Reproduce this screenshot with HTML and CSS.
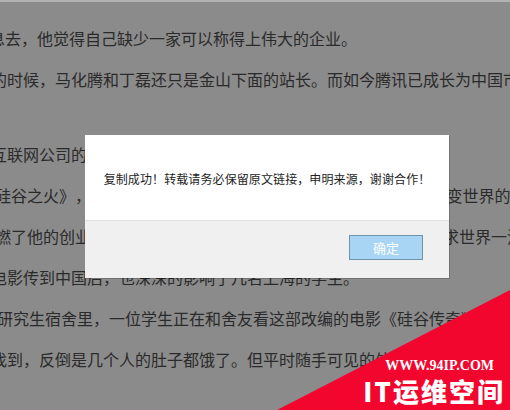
FILE: index.html
```html
<!DOCTYPE html>
<html lang="zh-CN">
<head>
<meta charset="utf-8">
<title>复制成功</title>
<link rel="stylesheet" href="styles.css">
</head>
<body>
<div class="topstrip"></div>
<main class="article">
  <p class="l1">息去，他觉得自己缺少一家可以称得上伟大的企业。</p>
  <p class="l2">的时候，马化腾和丁磊还只是金山下面的站长。而如今腾讯已成长为中国市值最高的公司</p>
  <div class="gap"></div>
  <p class="l3">互联网公司的创始人</p>
  <p class="l4">硅谷之火》， 这本讲述了苹果、微软等公司创始人如何用电脑改变世界的故事</p>
  <p class="l5">燃了他的创业梦想。他希望自己能打造一家像微软、苹果那样追求世界一流的企业</p>
  <p class="l6">电影传到中国后，也深深的影响了几名上海的学生。</p>
  <p class="l7">研究生宿舍里，一位学生正在和舍友看这部改编的电影《硅谷传奇》</p>
  <p class="l8">找到，反倒是几个人的肚子都饿了。但平时随手可见的外卖</p>
</main>

<div class="dialog">
  <div class="dialog-body">复制成功！转载请务必保留原文链接，申明来源，谢谢合作！</div>
  <div class="dialog-foot">
    <button class="btn-ok" type="button">确定</button>
  </div>
</div>

<div class="watermark">
  <div class="wm-url">WWW.94IP.COM</div>
  <div class="wm-name">IT运维空间</div>
</div>
</body>
</html>
```

FILE: styles.css
```css
html, body {
  margin: 0;
  padding: 0;
}
body {
  width: 510px;
  height: 410px;
  overflow: hidden;
  background: #8b8b8b;
  position: relative;
  font-family: "Noto Sans CJK SC", "Noto Sans", sans-serif;
  text-spacing-trim: space-all;
}
.topstrip {
  height: 2px;
  background: #b2b2b2;
}
.article {
  padding-top: 24px;
  color: #2a2a2a;
  font-size: 16px;
}
.article p {
  margin: 0 0 17px 0;
  line-height: 24px;
  white-space: pre;
}
.article .gap {
  height: 34px;
}
.l1 { margin-left: -11px !important; }
.l2 { margin-left: -9px !important; }
.l3 { margin-left: -9px !important; }
.l4 { margin-left: -5px !important; }
.l5 { margin-left: -5px !important; }
.l6 { margin-left: -9px !important; }
.l7 { margin-left: -3px !important; }
.l8 { margin-left: -9px !important; }

.dialog {
  position: absolute;
  left: 85px;
  top: 135px;
  width: 364px;
  background: #fff;
  box-shadow: 1px 1px 0 rgba(0, 0, 0, 0.18);
}
.dialog-body {
  height: 85px;
  display: flex;
  align-items: center;
  justify-content: center;
  font-size: 12px;
  letter-spacing: 0.1px;
  color: #1e1e1e;
  padding: 2px 0 0 0;
  box-sizing: border-box;
}
.dialog-foot {
  height: 58px;
  box-sizing: border-box;
  background: #f0f0f0;
  border-top: 1px solid #e2e2e2;
  display: flex;
  justify-content: flex-end;
  align-items: flex-start;
  padding: 14px 26px 0 0;
}
.btn-ok {
  width: 74px;
  height: 25px;
  margin: 0;
  padding: 0;
  background: #a9d5f4;
  border: 1px solid #6f93ad;
  color: #fff;
  font-family: "Noto Sans CJK SC", sans-serif;
  font-size: 13px;
  line-height: 23px;
}

.watermark {
  position: absolute;
  right: 0;
  bottom: 0;
  width: 233px;
  height: 120px;
  background: #f3062e;
  clip-path: polygon(100% 0, 100% 100%, 0 100%);
  display: flex;
  flex-direction: column;
  align-items: flex-end;
  justify-content: flex-end;
  padding: 0 7px 3px 0;
  box-sizing: border-box;
  color: #fff;
}
.wm-url {
  font-family: "Liberation Serif", serif;
  font-weight: bold;
  font-size: 14px;
  line-height: 16px;
  margin-right: 9px;
  margin-bottom: 1px;
}
.wm-name {
  font-family: "Noto Sans CJK SC", sans-serif;
  font-weight: 900;
  font-size: 26px;
  line-height: 32px;
  letter-spacing: 2px;
  margin-right: -2px;
}
```
